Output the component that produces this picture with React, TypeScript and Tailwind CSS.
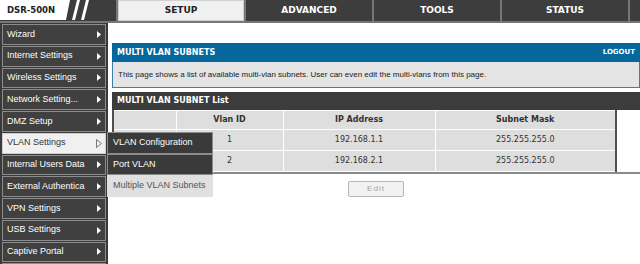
import React from 'react';

const menu = [
    'Wizard',
    'Internet Settings',
    'Wireless Settings',
    'Network Setting...',
    'DMZ Setup',
    'VLAN Settings',
    'Internal Users Data',
    'External Authentica',
    'VPN Settings',
    'USB Settings',
    'Captive Portal',
    '',
];

const tabs = ['SETUP', 'ADVANCED', 'TOOLS', 'STATUS'];

const rows = [
    { id: '1', ip: '192.168.1.1', mask: '255.255.255.0' },
    { id: '2', ip: '192.168.2.1', mask: '255.255.255.0' },
];

const Arrow = ({ hollow }: { hollow?: boolean }) => (
    <svg width="6" height="9" viewBox="0 0 6 9" className="shrink-0">
        {hollow ? (
            <polygon points="0.5,0.5 5.5,4.5 0.5,8.5" fill="none" stroke="#777" strokeWidth="1" />
        ) : (
            <polygon points="1,1 5,4.5 1,8" fill="#fff" />
        )}
    </svg>
);

const App: React.FC = () => {
    return (
        <div className="relative w-[640px] h-[264px] overflow-hidden bg-white font-['Liberation_Sans',Arial,sans-serif]">
            {/* Top bar */}
            <div className="flex h-[23px] bg-[#3d3d3d] border-b-2 border-[#777]">
                <div className="relative w-[116px] h-[21px]">
                    <svg width="116" height="21" className="absolute inset-0">
                        <polygon points="0,0 70,0 66,20 0,20" fill="#fff" />
                        <polygon points="77,0 80,0 75,20 72,20" fill="#fff" />
                        <polygon points="86,0 89,0 84,20 81,20" fill="#fff" />
                    </svg>
                    <span className="absolute left-[7px] top-[4px] text-[8.5px] leading-[12px] font-bold text-[#222] font-['DejaVu_Sans',sans-serif]">
                        DSR-500N
                    </span>
                </div>
                <div className="flex border-l-2 border-[#777]">
                    {tabs.map((t, i) => (
                        <div
                            key={t}
                            className={
                                i === 0
                                    ? 'w-[128px] h-[21px] flex items-center justify-center border-r-2 border-[#777] bg-[#f0f0f0] text-[#222] text-[9px] font-bold font-[\'DejaVu_Sans\',sans-serif] shadow-[inset_0_0_0_1px_#d0d0d0]'
                                    : 'w-[128px] h-[21px] flex items-center justify-center border-r-2 border-[#777] bg-[#3d3d3d] text-white text-[9px] font-bold font-[\'DejaVu_Sans\',sans-serif]'
                            }
                        >
                            {t}
                        </div>
                    ))}
                </div>
            </div>

            <div className="flex">
                {/* Sidebar */}
                <div className="w-[108px] h-[241px] bg-[#3a3a3a] pt-[1px] px-[2px] flex flex-col gap-[1px]">
                    {menu.map((m, i) => {
                        const active = m === 'VLAN Settings';
                        return (
                            <div
                                key={i}
                                className={
                                    active
                                        ? 'h-[20.75px] shrink-0 border border-[#cfcfcf] bg-[#f0f0f0] text-[#333] flex items-center justify-between pl-[4px] pr-[3px] text-[9px]'
                                        : 'h-[20.75px] shrink-0 border border-[#8c8c8c] bg-[#404040] text-white flex items-center justify-between pl-[4px] pr-[3px] text-[9px]'
                                }
                            >
                                <span className="whitespace-nowrap">{m}</span>
                                {m && <Arrow hollow={active} />}
                            </div>
                        );
                    })}
                </div>

                {/* Main */}
                <div className="flex-1 pl-[4px] pt-[20px]">
                    <div className="h-[19px] bg-[#05679b] flex items-center justify-between px-[5px] text-white font-bold font-['DejaVu_Sans',sans-serif]">
                        <span className="text-[8px]">MULTI VLAN SUBNETS</span>
                        <span className="text-[7px]">LOGOUT</span>
                    </div>
                    <div className="h-[26px] bg-[#e4e4e4] border-x border-b border-[#3a80ad] flex items-center pl-[5px] text-[8px] text-[#222]">
                        This page shows a list of available multi-vlan subnets. User can even edit the multi-vlans from this page.
                    </div>
                    <div className="mt-[4px] h-[18px] bg-[#3c3c3c] flex items-center pl-[5px] text-white text-[8px] font-bold font-['DejaVu_Sans',sans-serif]">
                        MULTI VLAN SUBNET List
                    </div>
                    <div className="border-b-2 border-[#8a8a8a]">
                        <table className="w-[505px] border-collapse border-x-2 border-b border-[#505050] text-[8px] text-[#333] font-['DejaVu_Sans',sans-serif]">
                            <thead>
                                <tr className="h-[19px] bg-[#dedede]">
                                    <th className="w-[63px] border border-white"></th>
                                    <th className="w-[107px] border border-white font-bold">Vlan ID</th>
                                    <th className="w-[152px] border border-white font-bold">IP Address</th>
                                    <th className="border border-white font-bold">Subnet Mask</th>
                                </tr>
                            </thead>
                            <tbody>
                                {rows.map((r) => (
                                    <tr key={r.id} className="h-[21px] bg-[#dedede]">
                                        <td className="border border-white"></td>
                                        <td className="border border-white text-center">{r.id}</td>
                                        <td className="border border-white text-center">{r.ip}</td>
                                        <td className="border border-white text-center">{r.mask}</td>
                                    </tr>
                                ))}
                            </tbody>
                        </table>
                    </div>
                    <div className="flex justify-center mt-[7px]">
                        <button className="w-[56px] h-[16px] rounded-[2px] border border-[#b4b4b4] bg-[#f2f2f2] text-[8px] tracking-[1px] text-[#a0a0a0]">
                            Edit
                        </button>
                    </div>
                </div>
            </div>

            {/* VLAN submenu */}
            <div className="absolute left-[107px] top-[132px] w-[106px] flex flex-col">
                <div className="h-[21.5px] border border-[#8c8c8c] bg-[#3a3a3a] text-white text-[9px] flex items-center pl-[5px]">
                    VLAN Configuration
                </div>
                <div className="h-[21.5px] border border-[#8c8c8c] bg-[#3a3a3a] text-white text-[9px] flex items-center pl-[5px]">
                    Port VLAN
                </div>
                <div className="h-[21.5px] bg-[#e0e0e0] text-[#555] text-[9px] flex items-center pl-[6px]">
                    Multiple VLAN Subnets
                </div>
            </div>
        </div>
    );
};

export default App;
